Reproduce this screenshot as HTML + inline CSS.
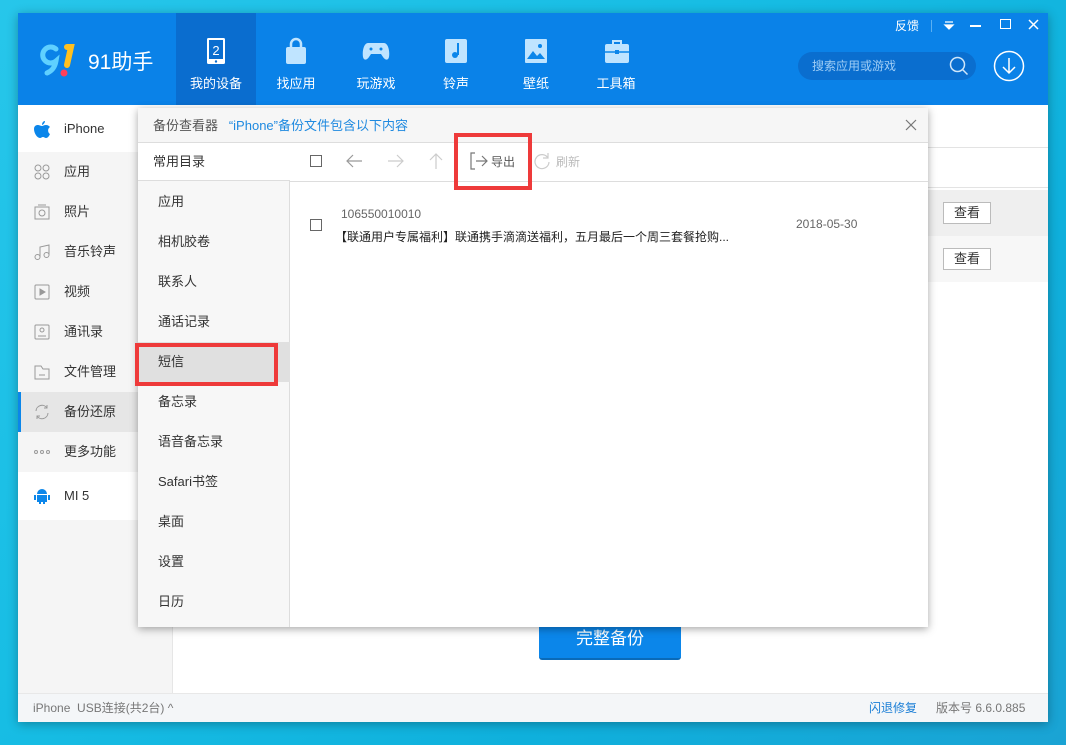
<!DOCTYPE html>
<html><head><meta charset="utf-8">
<style>
*{margin:0;padding:0;box-sizing:border-box}
body{width:1066px;height:745px;overflow:hidden;position:relative;font-family:"Liberation Sans","Noto Sans CJK SC",sans-serif;font-size:13px;color:#333;
background:linear-gradient(135deg,#27c6ea 0%,#17bde4 40%,#0fb0dc 70%,#1aa3d4 100%)}
.abs{position:absolute}
#win{left:18px;top:13px;width:1030px;height:709px;background:#fff;box-shadow:0 2px 10px rgba(0,0,0,.3)}
#hdr{left:0;top:0;width:1030px;height:92px;background:#0a82e8}
.tab{top:0;width:80px;height:92px;color:#fff;text-align:center;font-size:13px}
.tab .lb{position:absolute;left:0;right:0;top:60px}
.tab svg{position:absolute;left:28px;top:24px}
#side{left:0;top:92px;width:155px;height:588px;background:#f5f5f5;border-right:1px solid #e6e6e6}
.si{position:absolute;left:0;width:155px;height:40px;line-height:40px;padding-left:46px;font-size:13px;color:#333}
.si svg{position:absolute;left:16px;top:12px}
#status{left:0;top:680px;width:1030px;height:29px;background:#f4f6f8;border-top:1px solid #e8e8e8;font-size:12px;line-height:28px;color:#777}
#dlg{left:138px;top:108px;width:790px;height:519px;background:#fff;box-shadow:0 2px 8px rgba(0,0,0,.35)}
.dl{position:absolute;left:0;width:152px;height:40px;line-height:40px;padding-left:20px;font-size:13px;color:#333}
.red{position:absolute;border:4px solid #ee3a3a}
</style></head><body>
<div id="win" class="abs">
 <div id="hdr" class="abs">
  <svg class="abs" style="left:22px;top:30px" width="40" height="36" viewBox="0 0 40 36">
   <path d="M16 6a8 8 0 1 0 0 12c-1 6-4 10-9 12" fill="none" stroke="#5fd0ff" stroke-width="5" stroke-linecap="round"/>
   <path d="M27 4l4 0-4 18" stroke="#ffc01e" stroke-width="6" stroke-linecap="round" fill="none"/>
   <circle cx="24" cy="30" r="3.5" fill="#ff3f5a"/>
  </svg>
  <div class="abs" style="left:70px;top:33px;color:#fff;font-size:21px">91助手</div>
  <div class="abs tab" style="left:158px;background:#0a6dcf">
   <svg width="24" height="28" viewBox="0 0 24 28"><rect x="3" y="1" width="18" height="26" rx="1.5" fill="#fff"/><rect x="5" y="3" width="14" height="19" fill="#0a6dcf"/><text x="12" y="18" fill="#fff" font-size="13" text-anchor="middle" font-family="Liberation Sans">2</text><circle cx="12" cy="24.5" r="1.2" fill="#0a6dcf"/></svg>
   <div class="lb">我的设备</div></div>
  <div class="abs tab" style="left:238px"><svg width="24" height="28" viewBox="0 0 24 28"><path d="M7 10V7a5 5 0 0 1 10 0v3" stroke="#bfe4ff" stroke-width="2.5" fill="none"/><rect x="2" y="10" width="20" height="17" rx="2" fill="#bfe4ff"/></svg><div class="lb">找应用</div></div>
  <div class="abs tab" style="left:318px"><svg width="28" height="28" viewBox="0 0 28 28" style="left:26px"><path d="M6 6h16c4 0 6 8 5 14-1 4-4 3-6 0l-2-3h-10l-2 3c-2 3-5 4-6 0-1-6 1-14 5-14z" fill="#bfe4ff"/><circle cx="9" cy="12" r="1.5" fill="#0b86ea"/><circle cx="19" cy="12" r="1.5" fill="#0b86ea"/></svg><div class="lb">玩游戏</div></div>
  <div class="abs tab" style="left:398px"><svg width="24" height="28" viewBox="0 0 24 28"><rect x="1" y="2" width="22" height="24" rx="2" fill="#bfe4ff"/><path d="M14 6v12" stroke="#0b86ea" stroke-width="2"/><circle cx="11" cy="18" r="3" fill="#0b86ea"/></svg><div class="lb">铃声</div></div>
  <div class="abs tab" style="left:478px"><svg width="24" height="28" viewBox="0 0 24 28"><rect x="1" y="2" width="22" height="24" rx="1" fill="#bfe4ff"/><path d="M3 22l6-8 4 5 3-3 5 6z" fill="#0b86ea"/><circle cx="16" cy="9" r="2" fill="#0b86ea"/></svg><div class="lb">壁纸</div></div>
  <div class="abs tab" style="left:558px"><svg width="26" height="28" viewBox="0 0 26 28"><path d="M9 7V4h8v3" stroke="#bfe4ff" stroke-width="2" fill="none"/><rect x="1" y="7" width="24" height="19" rx="2" fill="#bfe4ff"/><path d="M1 15h24" stroke="#0b86ea" stroke-width="1.5"/><rect x="11" y="13" width="4" height="4" fill="#0b86ea"/></svg><div class="lb">工具箱</div></div>
  <div class="abs" style="left:877px;top:4px;color:#fff;font-size:12px">反馈</div>
  <div class="abs" style="left:913px;top:7px;width:1px;height:12px;background:#5ab0f2"></div>
  <svg class="abs" style="left:925px;top:6px" width="12" height="12"><path d="M2 3h8M2 6h8l-4 4z" stroke="#fff" stroke-width="1.3" fill="#fff"/></svg>
  <div class="abs" style="left:952px;top:12px;width:11px;height:1.5px;background:#fff"></div>
  <div class="abs" style="left:982px;top:6px;width:11px;height:10px;border:1.5px solid #fff"></div>
  <svg class="abs" style="left:1010px;top:6px" width="11" height="11"><path d="M1 1l9 9M10 1l-9 9" stroke="#fff" stroke-width="1.5"/></svg>
  <div class="abs" style="left:780px;top:39px;width:178px;height:28px;border-radius:14px;background:#0a6ecf;color:#9fcdf5;font-size:12px;line-height:28px;padding-left:14px">搜索应用或游戏</div>
  <svg class="abs" style="left:931px;top:43px" width="20" height="20"><circle cx="8.5" cy="8.5" r="7" stroke="#cfe6fa" stroke-width="1.5" fill="none"/><path d="M13.5 13.5l5 5" stroke="#cfe6fa" stroke-width="1.5"/></svg>
  <svg class="abs" style="left:975px;top:37px" width="32" height="32"><circle cx="16" cy="16" r="14.5" stroke="#fff" stroke-width="1.5" fill="none"/><path d="M16 8v15M10 17l6 6 6-6" stroke="#fff" stroke-width="1.5" fill="none"/></svg>
 </div>
 <div id="side" class="abs">
  <div class="si" style="top:0;height:47px;line-height:47px;background:#fff"><svg width="16" height="18" viewBox="0 0 16 18" style="top:15px"><path d="M11 1c0 2-2 4-3 4 0-2 1-4 3-4zM8 6c1 0 2-1 4-1 2 0 3 1 4 2-3 2-2 6 0 7-1 2-2 4-4 4-1 0-2-1-3-1s-2 1-3 1C3 18 0 13 0 9c0-3 2-4 4-4 1 0 3 1 4 1z" fill="#0b86ea"/></svg>iPhone</div>
  <div class="si" style="top:47px"><svg width="16" height="16"><g fill="none" stroke="#999"><circle cx="4" cy="4" r="3"/><circle cx="12" cy="4" r="3"/><circle cx="4" cy="12" r="3"/><circle cx="12" cy="12" r="3"/></g></svg>应用</div>
  <div class="si" style="top:87px"><svg width="16" height="16"><g fill="none" stroke="#999"><rect x="1" y="3" width="14" height="12"/><circle cx="8" cy="9" r="3"/><path d="M4 1h8"/></g></svg>照片</div>
  <div class="si" style="top:127px"><svg width="16" height="16"><g fill="none" stroke="#999"><circle cx="3.5" cy="13" r="2.5"/><circle cx="12.5" cy="11" r="2.5"/><path d="M6 13V3l9-2v10"/></g></svg>音乐铃声</div>
  <div class="si" style="top:167px"><svg width="16" height="16"><g fill="none" stroke="#999"><rect x="1" y="1" width="14" height="14" rx="1"/><path d="M6 5l5 3-5 3z" fill="#999"/></g></svg>视频</div>
  <div class="si" style="top:207px"><svg width="16" height="16"><g fill="none" stroke="#999"><rect x="1" y="1" width="14" height="14" rx="1"/><circle cx="8" cy="6" r="2"/><path d="M4 12h8"/></g></svg>通讯录</div>
  <div class="si" style="top:247px"><svg width="16" height="16"><g fill="none" stroke="#999"><path d="M1 2h6l2 3h6v10H1z"/><path d="M5 11h6"/></g></svg>文件管理</div>
  <div class="si" style="top:287px;background:#e6e6e6"><div class="abs" style="left:0;top:0;width:3px;height:40px;background:#0b86ea"></div><svg width="16" height="16"><g fill="none" stroke="#999"><path d="M2 7a6 6 0 0 1 11-3M14 9a6 6 0 0 1-11 3"/><path d="M13 1v3h-3M3 15v-3h3"/></g></svg>备份还原</div>
  <div class="si" style="top:327px"><svg width="16" height="16"><g fill="none" stroke="#999"><circle cx="2" cy="8" r="1.5"/><circle cx="8" cy="8" r="1.5"/><circle cx="14" cy="8" r="1.5"/></g></svg>更多功能</div>
  <div class="si" style="top:367px;height:48px;line-height:48px;background:#fff"><svg width="16" height="16" style="top:16px"><g fill="#0b86ea"><path d="M3 6a5 5 0 0 1 10 0z"/><rect x="3" y="7" width="10" height="7"/><rect x="0" y="7" width="2" height="5"/><rect x="14" y="7" width="2" height="5"/><rect x="5" y="13" width="2" height="3"/><rect x="9" y="13" width="2" height="3"/></g></svg>MI 5</div>
 </div>
 <div class="abs" style="left:910px;top:134px;width:120px;height:1px;background:#e3e3e3"></div>
 <div class="abs" style="left:910px;top:174px;width:120px;height:1px;background:#e3e3e3"></div>
 <div class="abs" style="left:910px;top:177px;width:120px;height:46px;background:#efefef"></div>
 <div class="abs" style="left:910px;top:223px;width:120px;height:46px;background:#f7f7f7"></div>
 <div class="abs" style="left:925px;top:189px;width:48px;height:22px;border:1px solid #bbb;background:#fff;text-align:center;line-height:20px;font-size:13px">查看</div>
 <div class="abs" style="left:925px;top:235px;width:48px;height:22px;border:1px solid #bbb;background:#fff;text-align:center;line-height:20px;font-size:13px">查看</div>
 <div class="abs" style="left:521px;top:600px;width:142px;height:47px;background:#0b86ea;border-radius:0 0 3px 3px;color:#fff;font-size:17px;text-align:center;line-height:52px;border-bottom:2px solid #0a6ab8">完整备份</div>
 <div id="status" class="abs"><span style="position:absolute;left:15px">iPhone&nbsp; USB连接(共2台) ^</span><span style="position:absolute;left:851px;color:#1a7ed6">闪退修复</span><span style="position:absolute;left:918px">版本号 6.6.0.885</span></div>
</div>
<div id="dlg" class="abs">
 <div class="abs" style="left:0;top:0;width:790px;height:35px;background:#f6f6f6;border-bottom:1px solid #ddd;line-height:35px;padding-left:15px;font-size:13px;color:#555">备份查看器 &nbsp;&nbsp;<span style="color:#1f8ae0">“iPhone”备份文件包含以下内容</span></div>
 <svg class="abs" style="left:767px;top:11px" width="12" height="12"><path d="M1 1l10 10M11 1l-10 10" stroke="#777" stroke-width="1.2"/></svg>
 <div class="abs" style="left:0;top:35px;width:152px;height:484px;background:#f7f7f7;border-right:1px solid #ddd"></div>
 <div class="abs" style="left:0;top:35px;width:152px;height:38px;background:#fff;border-bottom:1px solid #ddd;line-height:38px;padding-left:15px;font-size:13px">常用目录</div>
 <div class="abs" style="left:152px;top:73px;width:638px;height:1px;background:#ddd"></div>
 <div class="dl" style="top:74px">应用</div>
 <div class="dl" style="top:114px">相机胶卷</div>
 <div class="dl" style="top:154px">联系人</div>
 <div class="dl" style="top:194px">通话记录</div>
 <div class="dl" style="top:234px;background:#e0e0e0">短信</div>
 <div class="dl" style="top:274px">备忘录</div>
 <div class="dl" style="top:314px">语音备忘录</div>
 <div class="dl" style="top:354px">Safari书签</div>
 <div class="dl" style="top:394px">桌面</div>
 <div class="dl" style="top:434px">设置</div>
 <div class="dl" style="top:474px">日历</div>
 <div class="abs" style="left:172px;top:47px;width:12px;height:12px;border:1px solid #666"></div>
 <svg class="abs" style="left:207px;top:45px" width="18" height="16"><path d="M17 8H2M8 2L2 8l6 6" stroke="#999" stroke-width="1.2" fill="none"/></svg>
 <svg class="abs" style="left:249px;top:45px" width="18" height="16"><path d="M1 8h15M10 2l6 6-6 6" stroke="#ccc" stroke-width="1.2" fill="none"/></svg>
 <svg class="abs" style="left:290px;top:44px" width="16" height="18"><path d="M8 17V2M2 8l6-6 6 6" stroke="#ccc" stroke-width="1.2" fill="none"/></svg>
 <svg class="abs" style="left:332px;top:44px" width="18" height="18"><path d="M5 1H1v16h4M6 9h11M12 4l5 5-5 5" stroke="#777" stroke-width="1.2" fill="none"/></svg>
 <div class="abs" style="left:353px;top:45px;font-size:12px;color:#555">导出</div>
 <svg class="abs" style="left:396px;top:44px" width="16" height="18"><path d="M14 6A7 7 0 1 0 15 10M14 1v5h-5" stroke="#ccc" stroke-width="1.2" fill="none"/></svg>
 <div class="abs" style="left:418px;top:45px;font-size:12px;color:#bbb">刷新</div>
 <div class="abs" style="left:172px;top:111px;width:12px;height:12px;border:1px solid #666"></div>
 <div class="abs" style="left:203px;top:99px;font-size:12px;color:#666">106550010010</div>
 <div class="abs" style="left:197px;top:120px;font-size:12px;color:#222">【联通用户专属福利】联通携手滴滴送福利，五月最后一个周三套餐抢购...</div>
 <div class="abs" style="left:658px;top:109px;font-size:12px;color:#666">2018-05-30</div>
</div>
<div class="red" style="left:135px;top:343px;width:143px;height:43px"></div>
<div class="red" style="left:454px;top:133px;width:78px;height:57px"></div>
</body></html>
